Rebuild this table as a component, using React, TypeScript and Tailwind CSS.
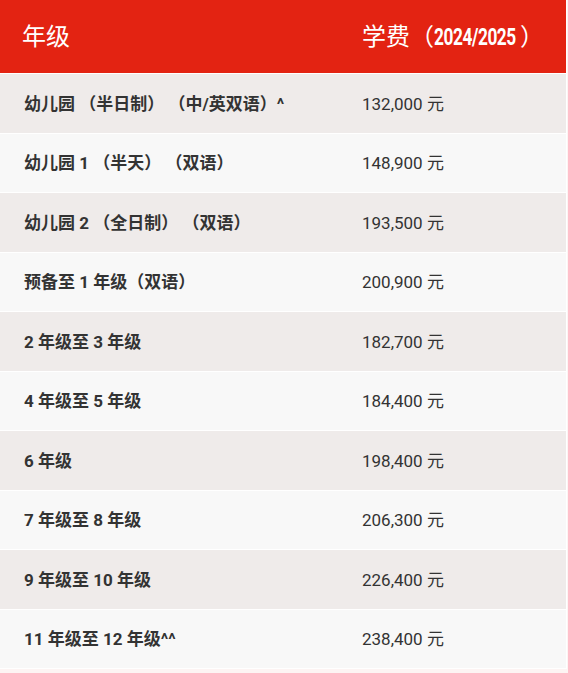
const rows: [string, string][] = [
  ["幼儿园 （半日制） （中/英双语）^", "132,000 元"],
  ["幼儿园 1 （半天） （双语）", "148,900 元"],
  ["幼儿园 2 （全日制） （双语）", "193,500 元"],
  ["预备至 1 年级（双语）", "200,900 元"],
  ["2 年级至 3 年级", "182,700 元"],
  ["4 年级至 5 年级", "184,400 元"],
  ["6 年级", "198,400 元"],
  ["7 年级至 8 年级", "206,300 元"],
  ["9 年级至 10 年级", "226,400 元"],
  ["11 年级至 12 年级^^", "238,400 元"],
];

const font = { fontFamily: 'Roboto, "Noto Sans CJK SC", sans-serif' };

export default function App() {
  return (
    <div className="min-h-[673px] w-[568px] bg-[#fdf4f3]" style={font}>
      <div className="w-[567px] border-r border-b border-white">
        <div className="flex h-[73px] items-center bg-[#e32312] text-[24px] text-white">
          <div className="w-[362px] pl-[22px]">年级</div>
          <div className="flex items-center whitespace-nowrap">
            学费（
            <span className="inline-block w-[86px] origin-left scale-x-[0.72] font-bold tracking-tight">2024/2025</span>）
          </div>
        </div>
        {rows.map(([grade, fee], i) => (
          <div
            key={grade}
            className={
              "flex h-[59.5px] items-center border-t border-white pt-[2px] text-[17px] text-[#333333] " +
              (i % 2 === 0 ? "bg-[#efebea]" : "bg-[#f8f8f8]")
            }
          >
            <div className="w-[362px] pl-[24px] font-bold">{grade}</div>
            <div>{fee}</div>
          </div>
        ))}
      </div>
    </div>
  );
}
